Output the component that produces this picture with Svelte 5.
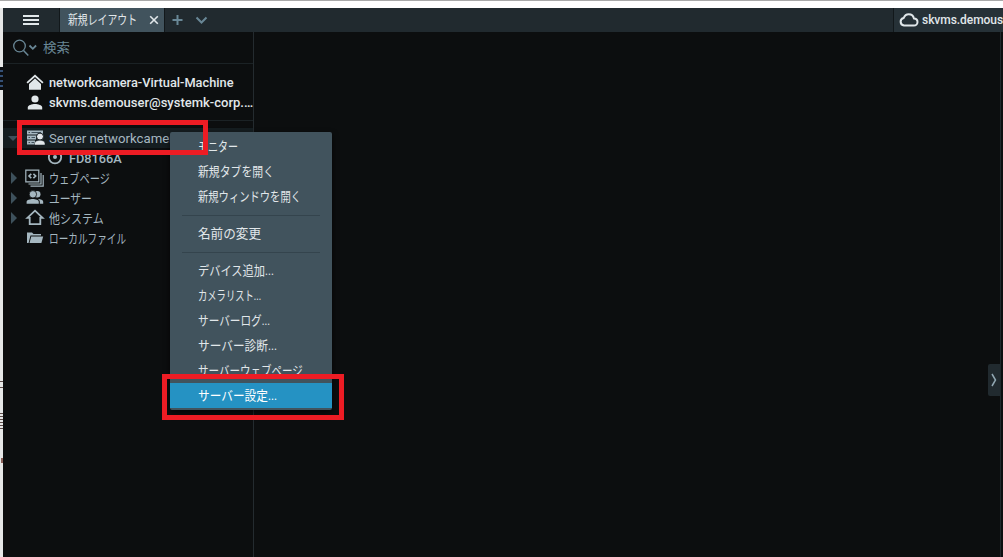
<script lang="ts">
  /**
   * Client desktop : arborescence des ressources et menu contextuel du serveur
   */

  interface TreeRow {
    label: string;
    width: number;
    icon: string;
    arrow?: "open" | "closed";
    child?: boolean;
    selected?: boolean;
  }

  interface MenuEntry {
    label: string;
    width: number;
    active?: boolean;
  }

  const account: TreeRow[] = [
    { label: "networkcamera-Virtual-Machine", width: 185, icon: "home" },
    { label: "skvms.demouser@systemk-corp.…", width: 204, icon: "user" },
  ];

  const tree: TreeRow[] = [
    { label: "Server networkcamera", width: 132, icon: "server", arrow: "open", selected: true },
    { label: "FD8166A", width: 53, icon: "camera", child: true },
    { label: "ウェブページ", width: 61, icon: "web", arrow: "closed" },
    { label: "ユーザー", width: 43, icon: "users", arrow: "closed" },
    { label: "他システム", width: 55, icon: "system", arrow: "closed" },
    { label: "ローカルファイル", width: 77, icon: "folder" },
  ];

  const groups: MenuEntry[][] = [
    [
      { label: "モニター", width: 40 },
      { label: "新規タブを開く", width: 76 },
      { label: "新規ウィンドウを開く", width: 103 },
    ],
    [{ label: "名前の変更", width: 63 }],
    [
      { label: "デバイス追加...", width: 76 },
      { label: "カメラリスト...", width: 63 },
      { label: "サーバーログ...", width: 72 },
      { label: "サーバー診断...", width: 79 },
      { label: "サーバーウェブページ", width: 105 },
      { label: "サーバー設定...", width: 79, active: true },
    ],
  ];

  function fit(node: HTMLElement, width: number) {
    node.style.transform = `scaleX(${width / node.offsetWidth})`;
  }
</script>

{#snippet icon(name: string)}
  <svg class="icon" width="20" height="18" viewBox="0 0 20 18" fill="currentColor">
    {#if name === "home"}
      <path d="M1.5 8.3 10 .5l8.5 7.8-1.2 1.2L10 3 2.7 9.5z" />
      <path d="M10 4.6 4 10v5.8h12V10z" />
    {:else if name === "user"}
      <circle cx="10" cy="5" r="3.6" />
      <path d="M2.8 15.5v-2c0-2.2 4.2-3.4 7.2-3.4s7.2 1.2 7.2 3.4v2z" />
    {:else if name === "server"}
      <path d="M2 1.5h16v4H2zM2 6.5h9v4H2zM2 11.5h8v4H2z" />
      <path d="M3.5 3.5H5M6.5 3.5H16M3.5 8.5H5M6.5 8.5H10M3.5 13.5H5M6.5 13.5H9" stroke="#40505a" />
      <circle cx="15" cy="7.6" r="3.5" fill="#e1e7ea" stroke="#151d20" />
      <path d="M9.5 16v-1.7c0-2 3.2-3.1 5.5-3.1s5 1.1 5 3.1V16z" fill="#e1e7ea" stroke="#151d20" stroke-width=".5" />
    {:else if name === "camera"}
      <circle cx="10" cy="8.2" r="6.2" fill="none" stroke="currentColor" stroke-width="1.8" />
      <circle cx="10" cy="8" r="2" />
    {:else if name === "web"}
      <path
        d="M.8 1.2h13v11.6H.8zM3.5 15H16V4M5.5 17.2h12.7V6"
        fill="none"
        stroke="currentColor"
        stroke-width="1.2"
      />
      <path d="M6.3 4.8 4 7l2.3 2.2M8.4 4.8 10.7 7 8.4 9.2" fill="none" stroke="currentColor" stroke-width="1.6" />
    {:else if name === "users"}
      <circle cx="12.2" cy="5.3" r="3.3" />
      <path d="M13 10c2.8 0 5.2 1 5.2 2.8v2h-3.4v-2c0-1-.7-2-1.8-2.8z" />
      <circle cx="7.9" cy="5.3" r="3.7" stroke="#0c0e0f" stroke-width=".8" />
      <path d="M1.6 14.8v-2c0-2 3.6-2.9 6.2-2.9s6 .9 6 2.9v2z" />
    {:else if name === "system"}
      <path
        d="M2.4 8.8 10 1.7l7.6 7.1h-2.3v6.3H4.7V8.8z"
        fill="none"
        stroke="currentColor"
        stroke-width="1.8"
      />
    {:else if name === "folder"}
      <path d="M2 3.5h5L8.5 5H16v1.6H5.5L3.6 14H2z" />
      <path d="M6.2 7.4h12L16.4 14H4.5z" />
    {/if}
  </svg>
{/snippet}

<div class="desktop">
  <div class="edge">
    <span class="mark selection"></span>
    <span class="mark kana"></span>
    <span class="mark kanji"></span>
    <span class="mark dot"></span>
  </div>
  <div class="client">
    <header class="titlebar">
      <button class="burger" aria-label="メニュー"><i></i><i></i><i></i></button>
      <div class="tab">
        <span class="label" use:fit={69}>新規レイアウト</span>
        <svg width="10" height="10" viewBox="0 0 10 10"><path d="m1.2 1.2 7.6 7.6m0-7.6L1.2 8.8" /></svg>
      </div>
      <svg class="tab-tools" width="50" height="24" viewBox="0 0 50 24">
        <path d="M12.5 7v10M7.5 12h10M31.5 9.5l5 5 5-5" />
      </svg>
      <div class="cloud">
        <svg width="20" height="14" viewBox="0 0 20 14">
          <path d="M5 12.5a3.8 3.8 0 0 1-.3-7.5C5.6 2.6 7.4 1.2 9.7 1.2c2.7 0 4.7 1.7 5.2 4.2 2.1.1 3.6 1.5 3.6 3.5s-1.6 3.6-3.6 3.6z" />
        </svg>
        <span>skvms.demouser</span>
      </div>
    </header>

    <div class="workspace">
      <aside class="panel">
        <div class="search">
          <svg width="26" height="18" viewBox="0 0 26 18">
            <circle cx="7.5" cy="7" r="5.8" stroke-width="1.3" />
            <path d="m11.5 11.5 4.8 5" stroke-width="1.5" />
            <path d="m17.5 6.5 3.3 3.3 3.3-3.3" stroke-width="1.8" />
          </svg>
          <span class="label" use:fit={27}>検索</span>
        </div>
        <div class="account">
          {#each account as row}
            <div class="row">
              <span class="arrow"></span>
              {@render icon(row.icon)}
              <span class="label" use:fit={row.width}>{row.label}</span>
            </div>
          {/each}
        </div>
        <div class="tree">
          {#each tree as row}
            <div class="row" class:child={row.child} class:selected={row.selected}>
              <span class="arrow {row.arrow ?? ''}"></span>
              {@render icon(row.icon)}
              <span class="label" use:fit={row.width}>{row.label}</span>
            </div>
          {/each}
        </div>
      </aside>
      <main class="scene">
        <button class="handle" aria-label="パネル">
          <svg width="8" height="14" viewBox="0 0 8 14"><path d="m2 1 3.5 6L2 13" /></svg>
        </button>
      </main>
    </div>
  </div>

  <div class="menu">
    {#each groups as group}
      <div class="group">
        {#each group as entry}
          <div class="entry" class:active={entry.active}>
            <span class="label" use:fit={entry.width}>{entry.label}</span>
          </div>
        {/each}
      </div>
    {/each}
  </div>
  <div class="frame server-frame"></div>
  <div class="frame settings-frame"></div>
</div>

<style>
  :global(body) {
    overflow: hidden;
    background: #f5f6f6;
  }

  .desktop {
    position: relative;
    display: flex;
    box-sizing: border-box;
    width: 1003px;
    height: 557px;
    padding-top: 8px;
    overflow: hidden;
    background: linear-gradient(#a9a9a9 1px, #fff 1px, #fff 8px, #e6e7e7 8px);
    font: 13px/20px Roboto, "Noto Sans CJK JP", sans-serif;
    white-space: nowrap;
  }

  .edge {
    position: relative;
    flex: none;
    width: 3px;
    overflow: hidden;
  }

  /* Slivers of the page behind the window */
  .mark {
    position: absolute;
    right: 0;
    width: 3px;
  }

  .selection {
    top: 59px;
    height: 23px;
    background: repeating-linear-gradient(#0b0d10 0 3px, #345076 3px 5px);
  }

  .kana {
    top: 373px;
    height: 7px;
    background: linear-gradient(#5c4b48 1px, transparent 1px 6px, #5c4b48 6px);
  }

  .kanji {
    top: 405px;
    height: 18px;
    background: repeating-linear-gradient(#5c4b48 0 1px, transparent 1px 3px);
  }

  .dot {
    top: 450px;
    width: 2px;
    height: 5px;
    background: #8a6058;
  }

  .client {
    display: flex;
    flex: 1;
    flex-direction: column;
    min-width: 0;
    background: #0c0e0f;
  }

  button {
    padding: 0;
    border: 0;
  }

  svg {
    flex: none;
  }

  .label {
    display: inline-block;
    flex: none;
    transform-origin: left center;
  }

  .titlebar {
    display: flex;
    height: 24px;
    background: #212a2f;
  }

  .burger {
    display: flex;
    flex-direction: column;
    justify-content: center;
    gap: 2px;
    width: 56px;
    padding-left: 20px;
    background: none;
  }

  .burger i {
    width: 16px;
    height: 2px;
    background: #e1e7ea;
  }

  .tab {
    display: flex;
    align-items: center;
    justify-content: space-between;
    box-sizing: border-box;
    width: 106px;
    padding: 0 7px 0 8px;
    border: solid #12181b;
    border-width: 0 1px;
    background: #41535d;
    color: #e1e7ea;
  }

  .tab svg,
  .tab-tools,
  .cloud svg,
  .search svg,
  .handle svg {
    fill: none;
    stroke: currentColor;
    stroke-width: 2;
  }

  .tab svg {
    margin-left: -10px;
    stroke-width: 1.6;
  }

  .tab-tools {
    color: #698796;
  }

  .cloud {
    display: flex;
    align-items: center;
    gap: 3px;
    box-sizing: border-box;
    width: 110px;
    margin-left: auto;
    padding-left: 5px;
    overflow: hidden;
    border-left: 1px solid #12181b;
    background: #263137;
    color: #e1e7ea;
    font-size: 12px;
    font-weight: 500;
    letter-spacing: -0.05px;
  }

  .workspace {
    display: flex;
    flex: 1;
  }

  .panel {
    box-sizing: border-box;
    width: 251px;
    overflow: hidden;
    border-right: 1px solid #242b2f;
  }

  .search {
    display: flex;
    align-items: center;
    gap: 5px;
    height: 31px;
    padding-left: 9px;
    border-bottom: 1px solid #1b2225;
    color: #698796;
  }

  .account {
    box-sizing: border-box;
    height: 57px;
    padding-top: 9px;
    border-bottom: 1px solid #1b2225;
    color: #e1e7ea;
    font-weight: 500;
  }

  .tree {
    padding-top: 7px;
    color: #a5b7c0;
  }

  .row {
    display: flex;
    align-items: center;
    height: 20px;
  }

  .row .label {
    padding-top: 1px;
  }

  .account .label {
    padding-top: 0;
  }

  .row .icon {
    margin-right: 4px;
  }

  .row.child {
    padding-left: 20px;
    font-weight: 500;
  }

  .row.selected {
    background: #151d20;
  }

  .arrow {
    display: flex;
    flex: none;
    align-items: center;
    width: 14px;
    margin-left: 8px;
  }

  .arrow.closed::before {
    border: 6px solid transparent;
    border-right-width: 0;
    border-left-color: #3d505b;
    content: "";
  }

  .arrow.open::before {
    margin-left: -3px;
    border: 5px solid transparent;
    border-top-color: #3d505b;
    border-bottom-width: 0;
    content: "";
  }

  .scene {
    display: flex;
    flex: 1;
    align-items: flex-start;
    justify-content: flex-end;
    margin-right: 2px;
    border-right: 1px solid #20282c;
  }

  .handle {
    display: flex;
    align-items: center;
    justify-content: center;
    width: 12px;
    height: 32px;
    margin-top: 332px;
    border-radius: 2px 0 0 2px;
    background: #212a2f;
    color: #91a7b2;
  }

  .handle svg {
    stroke-width: 1.5;
  }

  .menu {
    position: absolute;
    top: 132px;
    left: 170px;
    box-sizing: border-box;
    width: 162px;
    height: 278px;
    padding: 2px 0;
    border-radius: 2px;
    background: #41535d;
    box-shadow: 0 3px 6px #000a;
    color: #e1e7ea;
  }

  .group + .group::before {
    display: block;
    height: 1px;
    margin: 6px 12px 5px;
    background: #34444d;
    content: "";
  }

  .entry {
    display: flex;
    align-items: center;
    height: 25px;
    padding-left: 28px;
  }

  .entry.active {
    background: #2592c3;
    color: #fff;
  }

  .frame {
    position: absolute;
    box-sizing: border-box;
    border: 5px solid #ed1c24;
  }

  .server-frame {
    top: 120px;
    left: 17px;
    width: 191px;
    height: 35px;
  }

  .settings-frame {
    top: 374px;
    left: 162px;
    width: 182px;
    height: 46px;
  }
</style>
